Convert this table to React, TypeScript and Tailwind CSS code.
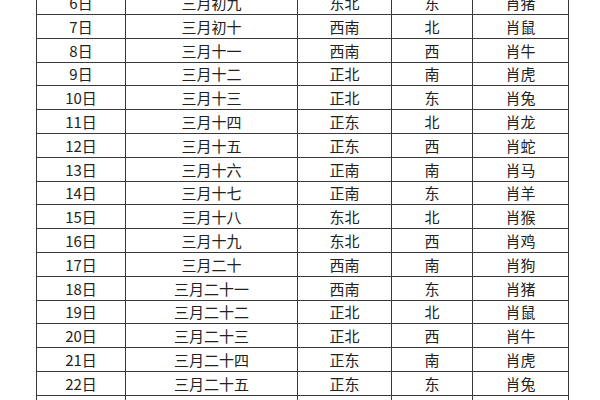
import React from "react";

const rows: [string, string, string, string, string][] = [
  ["6日", "三月初九", "东北", "东", "肖猪"],
  ["7日", "三月初十", "西南", "北", "肖鼠"],
  ["8日", "三月十一", "西南", "西", "肖牛"],
  ["9日", "三月十二", "正北", "南", "肖虎"],
  ["10日", "三月十三", "正北", "东", "肖兔"],
  ["11日", "三月十四", "正东", "北", "肖龙"],
  ["12日", "三月十五", "正东", "西", "肖蛇"],
  ["13日", "三月十六", "正南", "南", "肖马"],
  ["14日", "三月十七", "正南", "东", "肖羊"],
  ["15日", "三月十八", "东北", "北", "肖猴"],
  ["16日", "三月十九", "东北", "西", "肖鸡"],
  ["17日", "三月二十", "西南", "南", "肖狗"],
  ["18日", "三月二十一", "西南", "东", "肖猪"],
  ["19日", "三月二十二", "正北", "北", "肖鼠"],
  ["20日", "三月二十三", "正北", "西", "肖牛"],
  ["21日", "三月二十四", "正东", "南", "肖虎"],
  ["22日", "三月二十五", "正东", "东", "肖兔"],
  ["23日", "三月二十六", "正南", "北", "肖龙"],
];

export default function App() {
  return (
    <div
      className="w-[600px] h-[400px] overflow-hidden bg-white text-[#222] text-[15px]"
      style={{ fontFamily: '"Noto Sans CJK SC", "Noto Sans", sans-serif' }}
    >
      <div className="ml-[36px] -mt-[8.8px] w-[533px] border-l border-[#3a3a3a]">
        {rows.map((r, i) => (
          <div
            key={i}
            className="grid grid-cols-[89px_172px_94px_81px_96px] h-[23.8px] border-b border-[#3a3a3a] leading-none"
          >
            {r.map((c, j) => (
              <div
                key={j}
                className="flex items-center justify-center border-r border-[#3a3a3a]"
              >
                {c}
              </div>
            ))}
          </div>
        ))}
      </div>
    </div>
  );
}
